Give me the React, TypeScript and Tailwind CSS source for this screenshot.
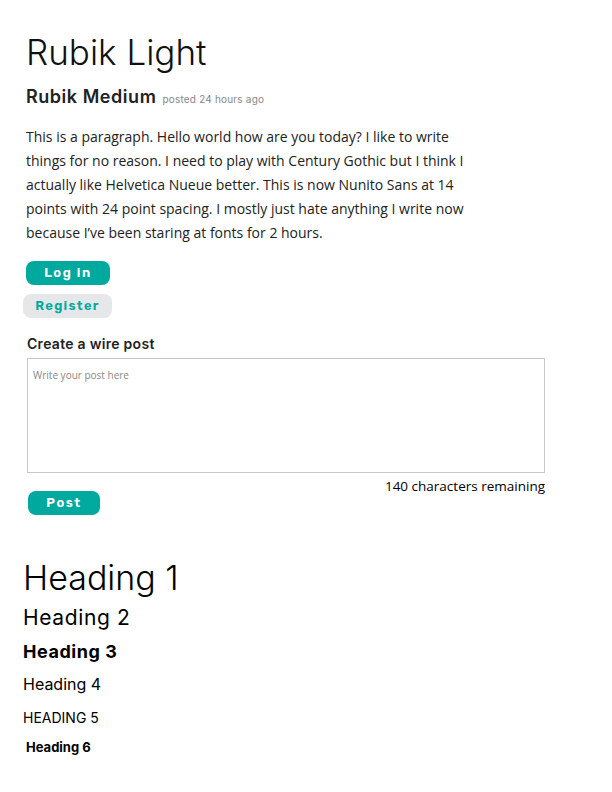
import React, { useState } from "react";

const rubik = { fontFamily: "Inter, Roboto, sans-serif" };

const Button = ({ label, variant }: { label: string; variant: "primary" | "secondary" }) => (
  <button
    className={
      variant === "primary"
        ? "h-6 rounded-lg bg-[#00a99d] px-0 text-[13px] font-semibold tracking-[0.12em] text-white font-['Rubik','Inter',sans-serif]"
        : "h-6 rounded-lg bg-[#e6e7e8] text-[13px] font-semibold tracking-[0.1em] text-[#00a99d] font-['Rubik','Inter',sans-serif]"
    }
  >
    {label}
  </button>
);

const App = () => {
  const [post, setPost] = useState("");

  return (
    <div className="min-h-[792px] w-[612px] bg-white text-[#222]">
      <div className="flex flex-col pl-[26px] pt-[30px]">
        <h1 className="text-[35px] font-light leading-[44px] text-[#111] font-['Inter',sans-serif]" style={rubik}>
          Rubik Light
        </h1>
        <div className="mt-[9px] flex items-baseline gap-[6px]">
          <span className="text-[18px] font-semibold tracking-[0.03em] text-[#222] font-['Inter',sans-serif]">
            Rubik Medium
          </span>
          <span className="text-[10px] tracking-[0.02em] text-[#888] font-['Inter',sans-serif]">
            posted 24 hours ago
          </span>
        </div>

        <p className="mt-[15px] w-[440px] text-[14px] leading-[24px] text-[#222] font-['Open_Sans',sans-serif]">
          This is a paragraph. Hello world how are you today? I like to write things for no reason. I need to play
          with Century Gothic but I think I actually like Helvetica Nueue better. This is now Nunito Sans at 14 points
          with 24 point spacing. I mostly just hate anything I write now because I’ve been staring at fonts for 2
          hours.
        </p>

        <div className="mt-[16px] w-[84px]">
          <div className="flex flex-col">
            <Button label="Log in" variant="primary" />
          </div>
        </div>
        <div className="-ml-[3px] mt-[9px] flex w-[89px] flex-col">
          <Button label="Register" variant="secondary" />
        </div>

        <h4 className="ml-[1px] mt-[15px] text-[14px] font-semibold tracking-[0.02em] text-[#222] font-['Inter',sans-serif]">
          Create a wire post
        </h4>
        <div className="ml-[1px] mt-[4px] flex w-[518px] flex-col items-end">
          <textarea
            value={post}
            onChange={(e) => setPost(e.target.value.slice(0, 140))}
            placeholder="Write your post here"
            className="h-[115px] w-full resize-none border border-[#c8c8c8] px-[5px] py-[9px] text-[10px] text-[#333] outline-none placeholder:text-[#888] font-['Open_Sans',sans-serif]"
          />
          <span className="mt-[5px] text-[13.5px] leading-[16px] text-black font-['Open_Sans',sans-serif]">
            {140 - post.length} characters remaining
          </span>
        </div>
        <div className="ml-[2px] -mt-[3px] flex w-[72px] flex-col">
          <Button label="Post" variant="primary" />
        </div>

        <div className="-ml-[3px] mt-[43px] flex flex-col text-black font-['Inter',sans-serif]">
          <h1 className="text-[34px] font-light leading-[40px]">Heading 1</h1>
          <h2 className="mt-[7px] text-[21px] leading-[26px] tracking-[0.03em]">Heading 2</h2>
          <h3 className="mt-[9px] text-[18px] font-bold leading-[24px] tracking-[0.03em]">Heading 3</h3>
          <h4 className="mt-[9px] text-[16px] leading-[22px]">Heading 4</h4>
          <h5 className="mt-[13px] text-[14px] uppercase leading-[20px]">Heading 5</h5>
          <h6 className="ml-[3px] mt-[10px] text-[13px] font-bold leading-[18px]">Heading 6</h6>
        </div>
      </div>
    </div>
  );
};

export default App;
